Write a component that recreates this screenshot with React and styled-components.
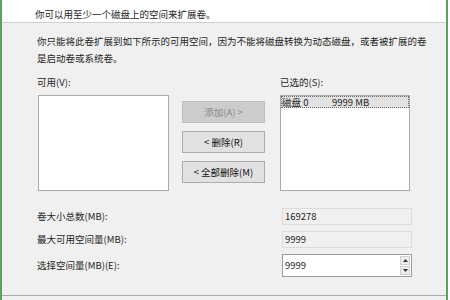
import React from 'react'
import styled, { createGlobalStyle } from 'styled-components'

const GlobalStyle = createGlobalStyle`
  html, body {
    margin: 0;
    padding: 0;
    background: #ffffff;
  }
  body {
    font-family: "Noto Sans CJK SC", "Liberation Sans", sans-serif;
    font-size: 9.5px;
    color: #1e1e1e;
  }
`

const Window = styled.div`
  width: 444px;
  height: 300px;
  border-left: 2px solid #5f9f5f;
  border-right: 2px solid #5f9f5f;
  background: #f0f0f0;
  display: flex;
  flex-direction: column;
  overflow: hidden;
`

const Header = styled.div`
  height: 23px;
  box-sizing: border-box;
  padding: 4px 0 0 33px;
  line-height: 20px;
  background: #ffffff;
  border-bottom: 1px solid #cfcfcf;
  flex-shrink: 0;
`

const Body = styled.div`
  height: 273px;
  box-sizing: border-box;
  padding: 10px 0 0 35px;
  border-bottom: 1px solid #a9a9a9;
  flex-shrink: 0;
`

const Para = styled.p`
  margin: 0;
  width: 390px;
  line-height: 17px;
`

const ListsRow = styled.div`
  display: flex;
  margin-top: 7px;
`

const Column = styled.div`
  display: flex;
  flex-direction: column;
  width: ${p => p.w}px;
  margin-left: ${p => p.ml || 0}px;
`

const Label = styled.div`
  line-height: 17px;
  height: 17px;
  margin-left: ${p => p.ml || 0}px;
`

const ListBox = styled.div`
  margin-top: 4px;
  height: 96px;
  box-sizing: border-box;
  background: #ffffff;
  border: 1px solid #ababab;
  padding: 0 0 0 0;
`

const ButtonStack = styled.div`
  display: flex;
  flex-direction: column;
  gap: 8px;
  padding-top: 27px;
`

const Button = styled.button`
  height: 22px;
  width: 83px;
  box-sizing: border-box;
  font: inherit;
  margin: 0;
  padding: 0;
  border: 1px solid ${p => (p.disabled ? '#bfbfbf' : '#adadad')};
  background: ${p => (p.disabled ? '#cccccc' : '#e1e1e1')};
  color: ${p => (p.disabled ? '#8a8a8a' : '#111111')};
`

const Row = styled.div`
  display: flex;
  height: 12px;
  line-height: 12px;
  background: #e2e2e2;
  outline: 1px dotted #6a6a6a;
  outline-offset: -1px;
  padding-left: 1px;
`

const Cell = styled.span`
  width: ${p => p.w}px;
`

const Fields = styled.div`
  display: grid;
  grid-template-columns: 245px 130px;
  margin-top: 17px;
  row-gap: 6px;
  align-items: center;
`

const ReadField = styled.div`
  height: 17px;
  box-sizing: border-box;
  border: 1px solid #dcdcdc;
  background: #f0f0f0;
  line-height: 15px;
  padding-left: 2px;
`

const SpinField = styled.div`
  height: 23px;
  box-sizing: border-box;
  border: 1px solid #9c9c9c;
  background: #ffffff;
  display: flex;
  align-items: stretch;
`

const SpinValue = styled.div`
  flex: 1;
  padding-left: 2px;
  line-height: 20px;
`

const SpinButtons = styled.div`
  width: 10px;
  margin: 1px 1px 1px 0;
  display: flex;
  flex-direction: column;
  gap: 1px;
`

const SpinBtn = styled.div`
  flex: 1;
  background: #ececec;
  border: 1px solid #d0d0d0;
  display: flex;
  align-items: center;
  justify-content: center;
`

const Arrow = ({ up }) => (
  <svg width="5" height="3" viewBox="0 0 5 3">
    <path d={up ? 'M0 3 L2.5 0 L5 3 Z' : 'M0 0 L2.5 3 L5 0 Z'} fill="#333" />
  </svg>
)

export default function App() {
  return (
    <>
      <GlobalStyle />
      <Window>
        <Header>你可以用至少一个磁盘上的空间来扩展卷。</Header>
        <Body>
          <Para>
            你只能将此卷扩展到如下所示的可用空间，因为不能将磁盘转换为动态磁盘，或者被扩展的卷是启动卷或系统卷。
          </Para>
          <ListsRow>
            <Column w={131} ml={1}>
              <Label ml={-1}>可用(V):</Label>
              <ListBox />
            </Column>
            <Column w={83} ml={13}>
              <ButtonStack>
                <Button disabled>添加(A) &gt;</Button>
                <Button>&lt; 删除(R)</Button>
                <Button>&lt; 全部删除(M)</Button>
              </ButtonStack>
            </Column>
            <Column w={130} ml={15}>
              <Label>已选的(S):</Label>
              <ListBox>
                <Row>
                  <Cell w={50}>磁盘 0</Cell>
                  <Cell w={70}>9999 MB</Cell>
                </Row>
              </ListBox>
            </Column>
          </ListsRow>
          <Fields>
            <Label>卷大小总数(MB):</Label>
            <ReadField>169278</ReadField>
            <Label>最大可用空间量(MB):</Label>
            <ReadField>9999</ReadField>
            <Label>选择空间量(MB)(E):</Label>
            <SpinField>
              <SpinValue>9999</SpinValue>
              <SpinButtons>
                <SpinBtn><Arrow up /></SpinBtn>
                <SpinBtn><Arrow /></SpinBtn>
              </SpinButtons>
            </SpinField>
          </Fields>
        </Body>
      </Window>
    </>
  )
}
